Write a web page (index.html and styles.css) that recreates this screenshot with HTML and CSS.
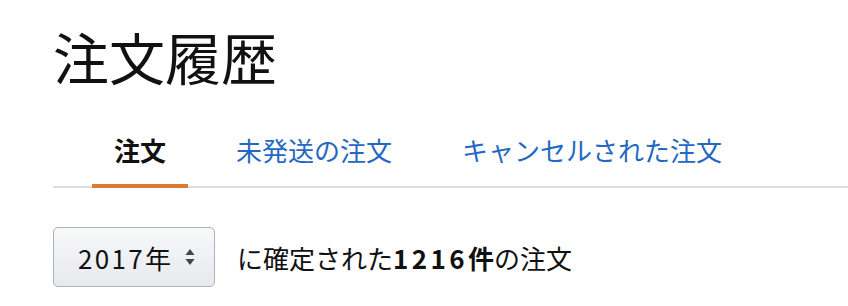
FILE: index.html
```html
<!DOCTYPE html>
<html lang="ja">
  <head>
    <meta charset="UTF-8" />
    <meta name="viewport" content="width=device-width, initial-scale=1.0" />
    <title>注文履歴</title>

    <link rel="stylesheet" href="styles.css">
  </head>
  <body>
    <div class="page">
      <h1 class="title">注文履歴</h1>

      <ul class="tabs">
        <li class="tab active">注文</li>
        <li class="tab"><a href="#">未発送の注文</a></li>
        <li class="tab"><a href="#">キャンセルされた注文</a></li>
      </ul>

      <div class="summary">
        <span class="select">
          <span class="select-label"><span class="num">2017</span>年</span>
          <svg class="select-arrows" width="10" height="16" viewBox="0 0 10 16">
            <path d="M5 0 L9.5 6 L0.5 6 Z" fill="#444" />
            <path d="M5 16 L9.5 10 L0.5 10 Z" fill="#444" />
          </svg>
        </span>
        <span class="count">に確定された<b><span class="num">1216</span>件</b>の注文</span>
      </div>
    </div>
  </body>
</html>
```

FILE: styles.css
```css
* {
  margin: 0;
  padding: 0;
  box-sizing: border-box;
}

body {
  font-family: 'Noto Sans CJK JP', 'Noto Sans', sans-serif;
  background-color: #fff;
  color: #111;
}

.page {
  padding: 26px 0 0 53px;
}

.title {
  font-size: 56px;
  font-weight: 400;
  line-height: 60px;
  margin-bottom: 46px;
}

.tabs {
  list-style: none;
  display: flex;
  gap: 26px;
  padding-left: 39px;
  border-bottom: 2px solid #ddd;

  & .tab {
    font-size: 26px;
    line-height: 36px;
    padding: 0 22px 16px;
    margin-bottom: -2px;
    border-bottom: 4px solid transparent;

    & a {
      color: #2468c2;
      text-decoration: none;
    }

    &.active {
      font-weight: 700;
      border-bottom-color: #dc7b2f;
    }
  }
}

.summary {
  display: flex;
  align-items: center;
  gap: 22px;
  margin-top: 39px;
}

.select {
  display: flex;
  align-items: center;
  justify-content: space-between;
  width: 162px;
  height: 60px;
  padding: 0 19px 0 24px;
  border: 1px solid #adb1b8;
  border-radius: 5px;
  background: linear-gradient(#f7f8fa, #e7e9ec);
  font-size: 26px;

  & .num {
    letter-spacing: 2.3px;
  }
}

.count {
  font-size: 26px;

  & b {
    font-weight: 700;
  }

  & .num {
    letter-spacing: 3.4px;
  }
}
```
